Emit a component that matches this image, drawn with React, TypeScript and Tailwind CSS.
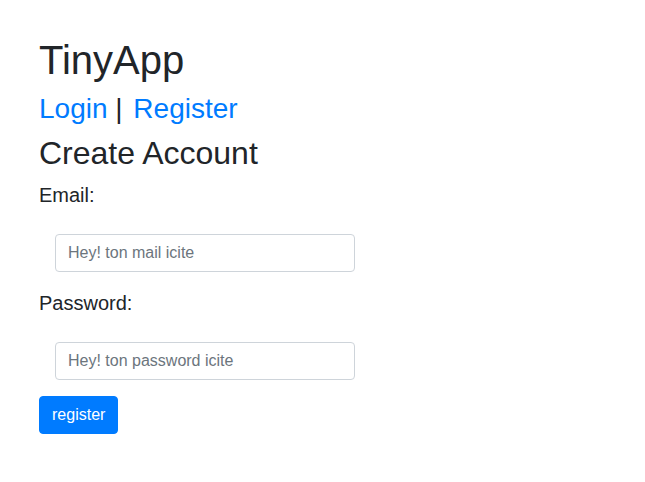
import React from "react";

export default function App() {
  return (
    <div
      className="min-h-[482px] bg-white pt-[36px] px-[39px] text-[#212529]"
      style={{ fontFamily: '"Liberation Sans", Arial, sans-serif' }}
    >
      <h1 className="text-[40px] leading-[1.2] font-normal mb-2">TinyApp</h1>
      <h3 className="text-[28px] leading-[1.2] font-normal mb-2">
        <a href="#" className="text-[#007bff]">Login</a> |{" "}
        <a href="#" className="ml-[3px] text-[#007bff]">Register</a>
      </h3>
      <h2 className="text-[32px] leading-[1.2] font-normal mb-2">Create Account</h2>
      <form onSubmit={(e) => e.preventDefault()}>
        <label className="block text-[20px] leading-[1.5]">Email:</label>
        <div className="pt-6 pl-4 mb-4">
          <input
            type="email"
            placeholder="Hey! ton mail icite"
            className="block w-[300px] h-[38px] border border-[#ced4da] rounded px-3 text-base text-[#495057] placeholder:text-[#6c757d] outline-none"
          />
        </div>
        <label className="block text-[20px] leading-[1.5]">Password:</label>
        <div className="pt-6 pl-4 mb-4">
          <input
            type="password"
            placeholder="Hey! ton password icite"
            className="block w-[300px] h-[38px] border border-[#ced4da] rounded px-3 text-base text-[#495057] placeholder:text-[#6c757d] outline-none"
          />
        </div>
        <button
          type="submit"
          className="h-[38px] px-3 bg-[#007bff] border border-[#007bff] text-white text-base leading-6 rounded"
        >
          register
        </button>
      </form>
    </div>
  );
}
